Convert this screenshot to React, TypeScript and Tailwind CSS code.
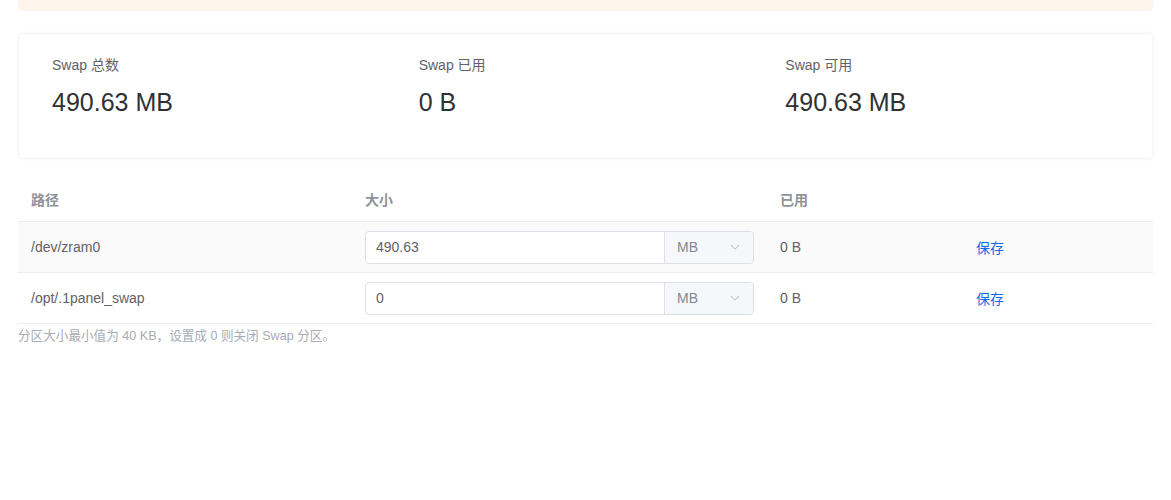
import React from "react";

const font = { fontFamily: '"Liberation Sans", "Noto Sans CJK SC", sans-serif' };

function Chevron() {
  return (
    <svg width="12" height="12" viewBox="0 0 1024 1024" className="text-[#a8abb2]">
      <path fill="currentColor" d="M831.872 340.864 512 652.672 192.128 340.864a30.592 30.592 0 0 0-42.752 0 29.12 29.12 0 0 0 0 41.6L489.664 714.24a32 32 0 0 0 44.672 0l340.288-331.712a29.12 29.12 0 0 0 0-41.728 30.592 30.592 0 0 0-42.752 0z" />
    </svg>
  );
}

function SizeInput({ value }: { value: string }) {
  return (
    <div className="flex h-[33px] w-[389px] rounded-[4px] border border-[#dcdfe6] bg-white">
      <div className="flex flex-1 items-center pl-[10px] text-[14px] text-[#606266]">{value}</div>
      <div className="flex w-[89px] items-center justify-between rounded-r-[4px] border-l border-[#dcdfe6] bg-[#f5f7fa] pl-[12px] pr-[12px] text-[14px] text-[#85888e]">
        <span>MB</span>
        <Chevron />
      </div>
    </div>
  );
}

function Row({ path, size, shaded }: { path: string; size: string; shaded?: boolean }) {
  return (
    <div className={`flex h-[51px] items-center border-b border-[#ebeef5] ${shaded ? "bg-[#fafafa]" : "bg-white"}`}>
      <div className="w-[335px] pl-[13px] text-[14px] text-[#606266]">{path}</div>
      <div className="w-[415px] pl-[12px]">
        <SizeInput value={size} />
      </div>
      <div className="w-[196px] pl-[12px] text-[14px] text-[#606266]">0 B</div>
      <div className="flex-1 pl-[12px] pt-[2px] text-[14px] text-[#1467e8]">保存</div>
    </div>
  );
}

export default function App() {
  const stats = [
    { label: "Swap 总数", value: "490.63 MB" },
    { label: "Swap 已用", value: "0 B" },
    { label: "Swap 可用", value: "490.63 MB" },
  ];
  return (
    <div className="min-h-[500px] bg-white px-[18px]" style={font}>
      <div className="h-[11px] w-[1135px] rounded-b-[4px] bg-[#fdf5eb]" />
      <div className="mt-[22px] h-[126px] w-[1135px] rounded-[4px] border border-[#f3f4fc] shadow-[0_0_3px_rgba(235,238,255,0.5)]">
        <div className="grid grid-cols-3 pl-[33px] pt-[20px]">
          {stats.map((s) => (
            <div key={s.label}>
              <div className="h-[22px] text-[14px] leading-[22px] text-[#606266]">{s.label}</div>
              <div className="mt-[10px] text-[25px] leading-[32px] text-[#303133]">{s.value}</div>
            </div>
          ))}
        </div>
      </div>
      <div className="mt-[21px] w-[1135px]">
        <div className="flex h-[42px] items-center border-b border-[#ebeef5] text-[14px] font-bold text-[#909399]">
          <div className="w-[335px] pl-[13px]">路径</div>
          <div className="w-[415px] pl-[12px]">大小</div>
          <div className="w-[196px] pl-[12px]">已用</div>
          <div className="flex-1" />
        </div>
        <Row path="/dev/zram0" size="490.63" shaded />
        <Row path="/opt/.1panel_swap" size="0" />
      </div>
      <div className="mt-[2px] text-[12.6px] leading-[20px] text-[#a8abb2]">分区大小最小值为 40 KB，设置成 0 则关闭 Swap 分区。</div>
    </div>
  );
}
